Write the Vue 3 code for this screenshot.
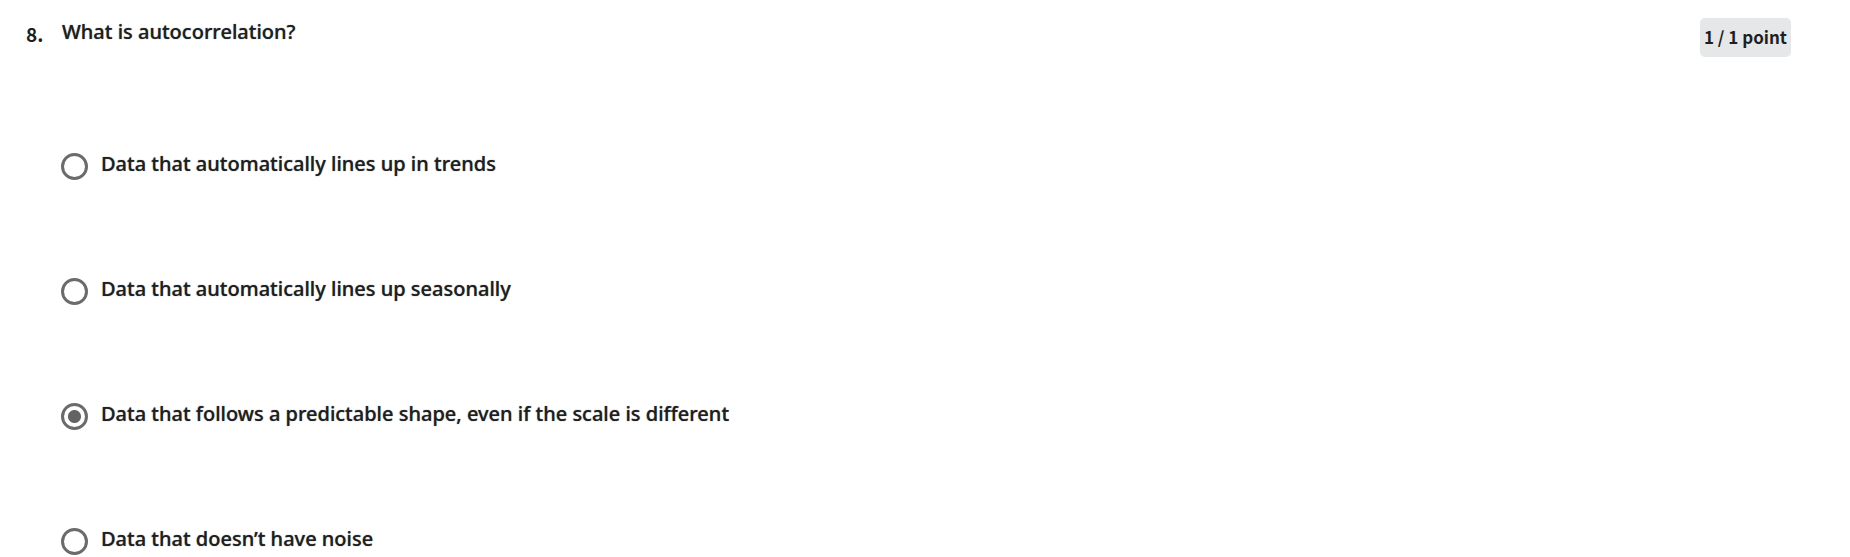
<script setup>
import { ref } from 'vue'
const choice = ref(2)
const options = [
  'Data that automatically lines up in trends',
  'Data that automatically lines up seasonally',
  'Data that follows a predictable shape, even if the scale is different',
  'Data that doesn’t have noise',
]
</script>

<template>
  <main class="question">
    <span class="number">8.</span>
    <fieldset class="body" aria-labelledby="prompt">
      <h2 id="prompt" class="prompt">What is autocorrelation?</h2>
      <div class="options">
        <label v-for="(text, i) in options" :key="i" class="option">
          <input v-model="choice" type="radio" name="answer" :value="i" class="radio" />
          <span class="label">{{ text }}</span>
        </label>
      </div>
    </fieldset>
    <div class="points">1 / 1 point</div>
  </main>
</template>

<style>
html, body { background: #fff; }
body { overflow: hidden; }
</style>

<style scoped>
.question {
  display: flex;
  align-items: flex-start;
  padding: 18px 59px 0 26px;
  font-family: "Noto Sans", "Open Sans", sans-serif;
  font-size: 20px;
  line-height: 28px;
  font-weight: 500;
  color: #1f1f1f;
}
.number {
  width: 35px;
  flex: none;
  padding-top: 2px;
  font-family: "Noto Sans CJK SC", sans-serif;
  font-size: 19px;
  font-weight: 700;
}
.body {
  flex: 1;
  min-width: 0;
  margin: 0;
  padding: 0;
  border: 0;
}
.prompt {
  margin: 0;
  padding-left: 1px;
  font-size: 20px;
  line-height: 28px;
  font-weight: 500;
}
.prompt,
.label {
  text-shadow: 0 0 1px rgba(31, 31, 31, 0.7);
}
.options {
  display: grid;
  gap: 95px;
  padding-top: 104px;
}
.option {
  display: flex;
  align-items: flex-start;
  gap: 13px;
  height: 30px;
}
.radio {
  appearance: none;
  flex: none;
  box-sizing: border-box;
  width: 27px;
  height: 27px;
  margin: 3px 0 0;
  border: 3px solid #6b6b6b;
  border-radius: 50%;
  background: #fff;
}
.radio:checked {
  background: radial-gradient(circle, #636363 6px, #fff 7px);
}
.points {
  flex: none;
  padding: 5px 4px 6px;
  border-radius: 5px;
  background: #e5e7e8;
  font-family: "Noto Sans CJK SC", sans-serif;
  font-size: 17px;
  font-weight: 700;
}
</style>
